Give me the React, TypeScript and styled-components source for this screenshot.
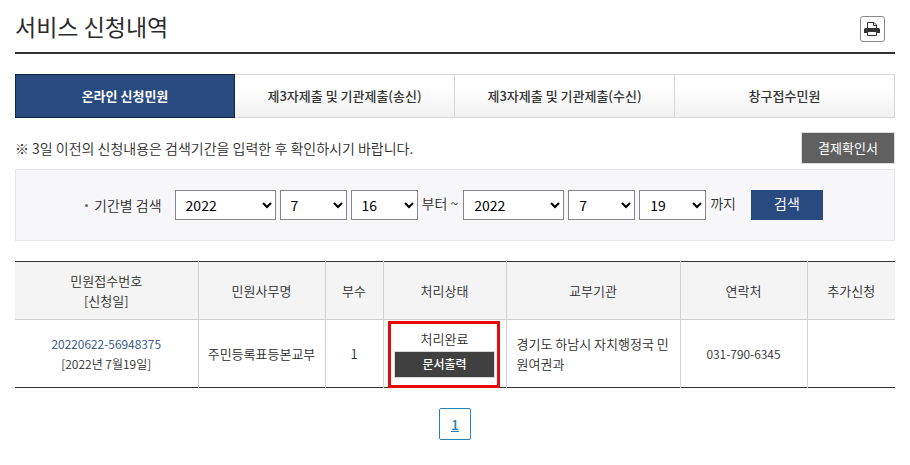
import React from "react";
import styled, { createGlobalStyle, css } from "styled-components";

const GlobalStyle = createGlobalStyle`
  *, *::before, *::after { box-sizing: border-box; }
  body {
    margin: 0;
    background: #fff;
    color: #2b2b2b;
    font-family: "Noto Sans CJK KR", "Noto Sans", sans-serif;
    font-size: 13px;
    line-height: 20px;
  }
  button, select { font-family: inherit; margin: 0; }
`;

const Page = styled.main`
  padding: 12px 15px 24px;
`;

const PageHeader = styled.header`
  display: flex;
  justify-content: space-between;
  align-items: flex-start;
  height: 42px;
  border-bottom: 2px solid #333;
`;

const Title = styled.h1`
  margin: 0;
  font-size: 23px;
  line-height: 28px;
  font-weight: 400;
`;

const PrintButton = styled.button`
  display: flex;
  align-items: center;
  justify-content: center;
  width: 25px;
  height: 26px;
  margin: 4px 10px 0 0;
  padding: 0;
  color: #333;
  background: #fff;
  border: 1px solid #888;
  border-radius: 3px;
`;

const Tabs = styled.nav`
  display: grid;
  grid-template-columns: repeat(4, 1fr);
  margin-top: 20px;
`;

const Tab = styled.button<{ $active?: boolean }>`
  height: 44px;
  padding: 0 0 2px;
  font-size: 13px;
  font-weight: 500;
  color: #333;
  background: linear-gradient(#fff 30%, #f0f0f0);
  border: 1px solid #d6d6d6;
  border-left-width: 0;
  ${(p) =>
    p.$active &&
    css`
      color: #fff;
      font-weight: 700;
      background: #284a7e;
      border: 1px solid #0d2547;
    `}
`;

const NoticeRow = styled.div`
  display: flex;
  justify-content: space-between;
  align-items: center;
  margin-top: 14px;
`;

const Notice = styled.p`
  margin: 0;
  font-size: 14px;
  font-weight: 350;
`;

const ReceiptButton = styled.button`
  width: 94px;
  height: 32px;
  padding: 0 0 2px;
  font-size: 13px;
  color: #fff;
  background: #5f5f5f;
  border: 1px solid #dcdcdc;
`;

const SearchForm = styled.form`
  display: flex;
  align-items: center;
  justify-content: center;
  height: 72px;
  margin-top: 5px;
  padding-right: 2px;
  font-weight: 350;
  background: #f7f7fa;
  border: 1px solid #e5e5e8;
`;

const SearchLabel = styled.span`
  display: flex;
  align-items: center;
  gap: 6px;
  margin-right: 13px;
  font-size: 14px;
  &::before {
    content: "";
    width: 3px;
    height: 3px;
    border-radius: 50%;
    background: #666;
  }
`;

const DateGroup = styled.span`
  display: flex;
  gap: 4px;
`;

const Select = styled.select<{ $wide?: boolean }>`
  width: ${(p) => (p.$wide ? 101 : 67)}px;
  height: 30px;
  padding: 0 0 0 6px;
  font-size: 14px;
  color: #000;
  background: #fff;
  border: 1px solid #85858a;
  border-radius: 0;
`;

const Particle = styled.span`
  margin: 0 5px 0 4px;
  padding-bottom: 4px;
  font-size: 14px;
`;

const SearchButton = styled.button`
  width: 72px;
  height: 30px;
  margin-left: 10px;
  padding: 0 0 4px;
  font-size: 14px;
  color: #fff;
  background: #284a7e;
  border: 0;
`;

const Table = styled.table`
  width: 100%;
  margin-top: 20px;
  table-layout: fixed;
  border-collapse: collapse;
  border-top: 1px solid #333;
  border-bottom: 1px solid #333;
  font-weight: 350;
`;

const HeadCell = styled.th`
  height: 58px;
  padding: 0;
  font-weight: 350;
  background: #f4f4f4;
  border-bottom: 1px solid #d0d0d0;
  & + & { border-left: 1px solid #d0d0d0; }
`;

const Cell = styled.td<{ $left?: boolean }>`
  position: relative;
  height: 68px;
  padding: 0 ${(p) => (p.$left ? 10 : 0)}px;
  text-align: ${(p) => (p.$left ? "left" : "center")};
  & + & { border-left: 1px solid #d0d0d0; }
`;

const ReceiptLink = styled.a`
  display: block;
  font-size: 12px;
  color: #284a7e;
  text-decoration: none;
`;

const Small = styled.span`
  font-size: 12px;
`;

const OutputButton = styled.button`
  display: block;
  width: 101px;
  height: 27px;
  margin: 2px auto 0;
  padding: 0 0 2px;
  font-size: 12px;
  font-weight: 500;
  color: #fff;
  background: #404040;
  border: 1px solid #d8d8d8;
`;

const Highlight = styled.span`
  position: absolute;
  inset: 1px 6px -1px 4px;
  border: 3px solid #e60a0a;
  pointer-events: none;
`;

const Pagination = styled.nav`
  display: flex;
  justify-content: center;
  margin-top: 20px;
`;

const PageLink = styled.a`
  display: flex;
  align-items: center;
  justify-content: center;
  width: 32px;
  height: 32px;
  font-size: 14px;
  font-weight: 500;
  color: #2b82b8;
  border: 1px solid #2b82b8;
  border-radius: 2px;
`;

const tabs = ["온라인 신청민원", "제3자제출 및 기관제출(송신)", "제3자제출 및 기관제출(수신)", "창구접수민원"];
const columnWidths = [183, 127, 58, 123, 174, 127, 88];
const months = Array.from({ length: 12 }, (_, i) => i + 1);
const days = Array.from({ length: 31 }, (_, i) => i + 1);
const years = [2020, 2021, 2022];

function DateFields({ name, day }: { name: string; day: number }) {
  const fields = [
    { unit: "년", options: years, value: 2022 },
    { unit: "월", options: months, value: 7 },
    { unit: "일", options: days, value: day },
  ];
  return (
    <DateGroup>
      {fields.map((f) => (
        <Select key={f.unit} $wide={f.unit === "년"} defaultValue={f.value} aria-label={`${name} ${f.unit}`}>
          {f.options.map((o) => (
            <option key={o}>{o}</option>
          ))}
        </Select>
      ))}
    </DateGroup>
  );
}

function PrintIcon() {
  return (
    <svg width="17" height="14" viewBox="0 0 17 14" aria-hidden="true">
      <path d="M3.5 7V.5H10L12.5 3v4M9.5 .5v3h3" fill="none" stroke="currentColor" />
      <path d="M1.5 6h13A1.5 1.5 0 0 1 16 7.5V11H0V7.5A1.5 1.5 0 0 1 1.5 6z" fill="currentColor" />
      <path d="M3.5 9.5h9v4h-9z" fill="#fff" stroke="currentColor" />
    </svg>
  );
}

export default function App() {
  return (
    <>
      <GlobalStyle />
      <Page>
        <PageHeader>
          <Title>서비스 신청내역</Title>
          <PrintButton type="button" aria-label="인쇄">
            <PrintIcon />
          </PrintButton>
        </PageHeader>
        <Tabs>
          {tabs.map((t, i) => (
            <Tab key={t} type="button" $active={i === 0}>
              {t}
            </Tab>
          ))}
        </Tabs>
        <NoticeRow>
          <Notice>※ 3일 이전의 신청내용은 검색기간을 입력한 후 확인하시기 바랍니다.</Notice>
          <ReceiptButton type="button">결제확인서</ReceiptButton>
        </NoticeRow>
        <SearchForm onSubmit={(e) => e.preventDefault()}>
          <SearchLabel>기간별 검색</SearchLabel>
          <DateFields name="시작" day={16} />
          <Particle>부터 ~</Particle>
          <DateFields name="종료" day={19} />
          <Particle>까지</Particle>
          <SearchButton type="submit">검색</SearchButton>
        </SearchForm>
        <Table>
          <colgroup>
            {columnWidths.map((w, i) => (
              <col key={i} width={w} />
            ))}
          </colgroup>
          <thead>
            <tr>
              <HeadCell>
                민원접수번호
                <br />
                [신청일]
              </HeadCell>
              <HeadCell>민원사무명</HeadCell>
              <HeadCell>부수</HeadCell>
              <HeadCell>처리상태</HeadCell>
              <HeadCell>교부기관</HeadCell>
              <HeadCell>연락처</HeadCell>
              <HeadCell>추가신청</HeadCell>
            </tr>
          </thead>
          <tbody>
            <tr>
              <Cell>
                <ReceiptLink href="#receipt">20220622-56948375</ReceiptLink>
                <Small>[2022년 7월19일]</Small>
              </Cell>
              <Cell>주민등록표등본교부</Cell>
              <Cell>1</Cell>
              <Cell>
                처리완료
                <OutputButton type="button">문서출력</OutputButton>
                <Highlight />
              </Cell>
              <Cell $left>경기도 하남시 자치행정국 민원여권과</Cell>
              <Cell>
                <Small>031-790-6345</Small>
              </Cell>
              <Cell />
            </tr>
          </tbody>
        </Table>
        <Pagination aria-label="페이지">
          <PageLink href="#page-1" aria-current="page">
            1
          </PageLink>
        </Pagination>
      </Page>
    </>
  );
}
